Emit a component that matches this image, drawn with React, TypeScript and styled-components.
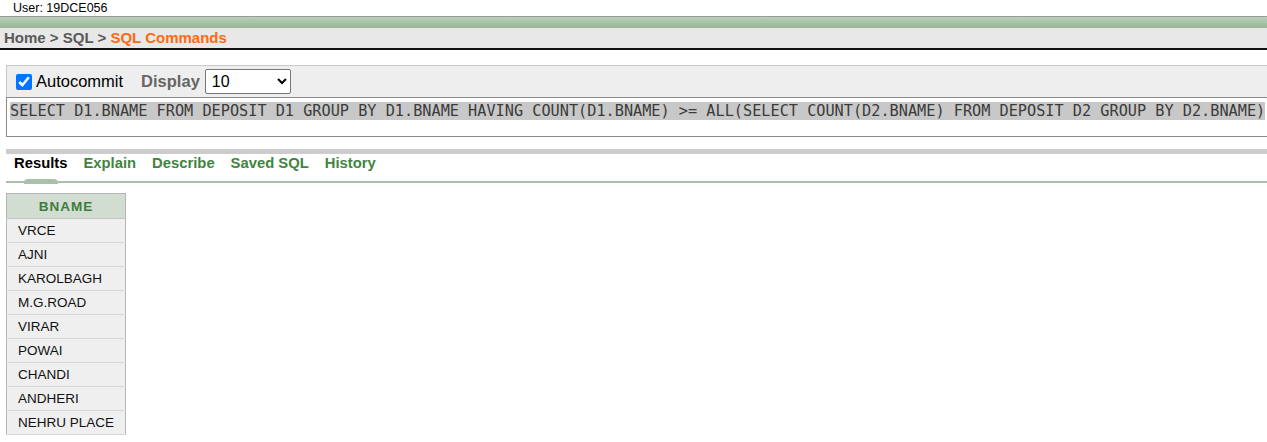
import * as React from 'react';
import styled, { createGlobalStyle } from 'styled-components';

const GlobalStyle = createGlobalStyle`
    html, body {
        margin: 0;
        padding: 0;
        background: #fff;
        overflow: hidden;
    }
    body {
        font-family: "Liberation Sans", Arial, sans-serif;
        color: #000;
    }
`;

const Page = styled.div`
    width: 1267px;
    overflow: hidden;
`;

const UserLine = styled.div`
    height: 16px;
    padding-left: 13px;
    font-size: 12.5px;
    line-height: 16px;
    box-sizing: border-box;
`;

const HeaderBar = styled.div`
    height: 11px;
    border-top: 1px solid #9a9a9a;
    background: linear-gradient(#b9d0b9, #97b697);
`;

const Breadcrumb = styled.div`
    height: 20px;
    background: #e7e8e7;
    border-bottom: 2px solid #111;
    padding-left: 4px;
    font-size: 15px;
    font-weight: 700;
    line-height: 20px;
    color: #5a5a5a;

    .current {
        color: #ff6a0e;
    }
`;

const Body = styled.div`
    padding: 15px 0 0 6px;
    width: 1300px;
`;

const Toolbar = styled.div`
    height: 31px;
    background: #eeeeee;
    border-top: 1px solid #c9c9c9;
    border-left: 1px solid #c9c9c9;
    display: flex;
    align-items: center;
    padding-left: 9px;
    font-size: 16.5px;

    input[type='checkbox'] {
        width: 16px;
        height: 16px;
        margin: 0 4px 0 0;
        accent-color: #0075ff;
    }
`;

const DisplayLabel = styled.span`
    font-weight: 700;
    color: #666;
    margin-left: 18px;
    margin-right: 5px;
`;

const Select = styled.select`
    width: 86px;
    height: 25px;
    font-family: "Liberation Sans", Arial, sans-serif;
    font-size: 16px;
    border: 1px solid #767676;
    border-radius: 2px;
    background: #fff;
    padding: 0 2px;
`;

const SqlBox = styled.div`
    border: 1px solid #8a8a8a;
    border-right: none;
    background: #fff;
    padding: 4px 0 0 3px;
    box-sizing: border-box;
    height: 40px;
    font-family: "DejaVu Sans Mono", "Liberation Mono", monospace;
    font-size: 15.22px;
    line-height: 18px;
    white-space: pre;
    color: #3b3b3b;

    span {
        background: #c8c8c8;
    }
`;

const TabStrip = styled.div`
    margin-top: 12px;
    border-top: 5px solid #cccccc;
    border-bottom: 2px solid #aac0aa;
    display: flex;
    height: 27px;
`;

const Tab = styled.div<{ $active?: boolean }>`
    position: relative;
    padding: 0 8px;
    margin-top: -1px;
    font-size: 14.8px;
    font-weight: 700;
    line-height: 20px;
    color: ${p => (p.$active ? '#000' : '#3f843f')};

    &::after {
        content: '';
        display: ${p => (p.$active ? 'block' : 'none')};
        position: absolute;
        left: 18px;
        width: 34px;
        bottom: -3px;
        height: 5px;
        border-radius: 4px 4px 0 0;
        background: #aac0aa;
    }
`;

const ResultTable = styled.table`
    margin-top: 10px;
    border-collapse: collapse;
    width: 120px;
    border: 1px solid #b5b5b5;
    font-size: 13px;

    th {
        background: #d2ddd1;
        color: #3d7c3d;
        font-weight: 700;
        font-size: 13.5px;
        letter-spacing: 1px;
        height: 24px;
        padding: 0;
        text-align: center;
        border-bottom: 1px solid #c4c4c4;
    }

    td {
        background: #efefef;
        height: 23px;
        padding: 0 0 0 11px;
        border-bottom: 1px solid #d6d6d6;
        color: #111;
        font-size: 13.5px;
    }
`;

const SQL =
    'SELECT D1.BNAME FROM DEPOSIT D1 GROUP BY D1.BNAME HAVING COUNT(D1.BNAME) >= ALL(SELECT COUNT(D2.BNAME) FROM DEPOSIT D2 GROUP BY D2.BNAME)';

const ROWS = ['VRCE', 'AJNI', 'KAROLBAGH', 'M.G.ROAD', 'VIRAR', 'POWAI', 'CHANDI', 'ANDHERI', 'NEHRU PLACE'];

const TABS = ['Results', 'Explain', 'Describe', 'Saved SQL', 'History'];

export default function App() {
    return (
        <Page>
            <GlobalStyle />
            <UserLine>User: 19DCE056</UserLine>
            <HeaderBar />
            <Breadcrumb>
                Home &gt; SQL &gt; <span className="current">SQL Commands</span>
            </Breadcrumb>
            <Body>
                <Toolbar>
                    <input type="checkbox" defaultChecked />
                    Autocommit
                    <DisplayLabel>Display</DisplayLabel>
                    <Select defaultValue="10">
                        <option>10</option>
                        <option>25</option>
                        <option>50</option>
                        <option>100</option>
                    </Select>
                </Toolbar>
                <SqlBox>
                    <span>{SQL}</span>
                </SqlBox>
                <TabStrip>
                    {TABS.map((t, i) => (
                        <Tab key={t} $active={i === 0}>{t}</Tab>
                    ))}
                </TabStrip>
                <ResultTable>
                    <thead>
                        <tr><th>BNAME</th></tr>
                    </thead>
                    <tbody>
                        {ROWS.map(r => (
                            <tr key={r}><td>{r}</td></tr>
                        ))}
                    </tbody>
                </ResultTable>
            </Body>
        </Page>
    );
}
